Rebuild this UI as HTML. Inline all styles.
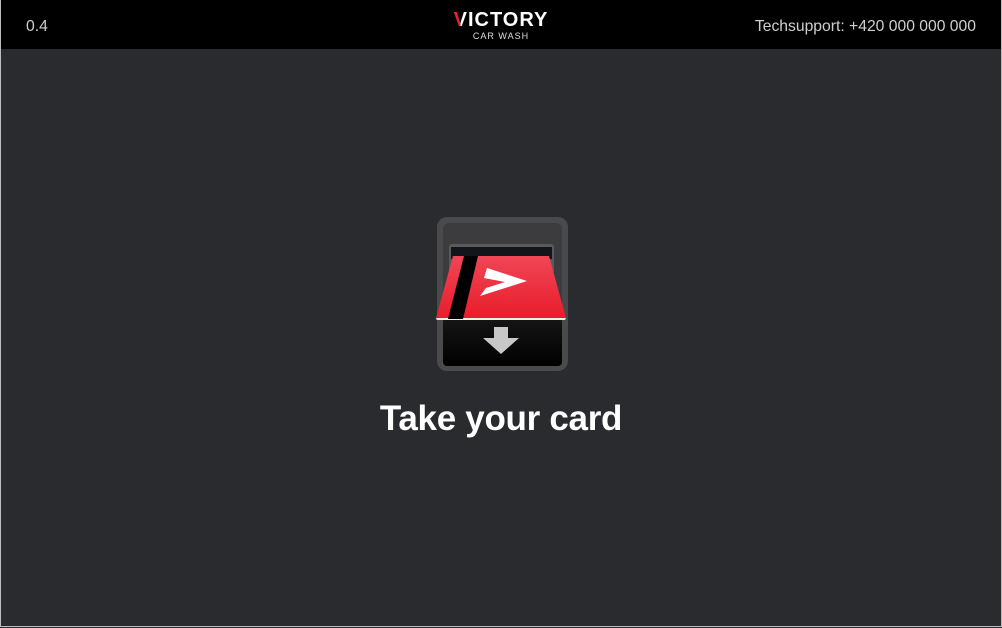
<!DOCTYPE html>
<html><head><style>
body{margin:0;width:1002px;height:628px;background:#2a2b2f;font-family:"Liberation Sans",sans-serif;overflow:hidden;position:relative}
.frame{position:absolute;left:0;top:0;width:1000px;height:626px;border:1px solid #bdbdbd;border-top:none}
.top{position:absolute;left:1px;top:0;width:1000px;height:49px;background:#000;color:#cfcfcf;font-size:15.7px}
.v{position:absolute;left:25px;top:18px}
.t{position:absolute;right:25px;top:18px}
.logo{position:absolute;left:0;width:1000px;text-align:center;top:9px;color:#fff;font-weight:bold;font-size:20px;letter-spacing:1px}
.rv{background:linear-gradient(90deg,#e8202f 0,#e8202f 48%,#fff 48%);-webkit-background-clip:text;background-clip:text;color:transparent}
.sub{position:absolute;left:0;width:1000px;text-align:center;top:31px;color:#ddd;font-size:9px;letter-spacing:1px}
h1{position:absolute;left:0;width:1002px;text-align:center;top:399px;margin:0;color:#fff;font-size:35px;font-weight:bold;letter-spacing:-0.3px}
</style></head><body>
<div class="frame"></div>
<div class="top"><span class="v">0.4</span>
<div class="logo"><span class="rv">V</span>ICTORY</div>
<div class="sub">CAR WASH</div>
<span class="t">Techsupport: +420 000 000 000</span></div>
<svg style="position:absolute;left:0;top:0" width="1002" height="628">
<defs>
<linearGradient id="c" x1="0" y1="0" x2="0" y2="1"><stop offset="0" stop-color="#f04656"/><stop offset="1" stop-color="#e81c2a"/></linearGradient>
<linearGradient id="d" x1="0" y1="0" x2="0" y2="1"><stop offset="0" stop-color="#151515"/><stop offset="1" stop-color="#000"/></linearGradient>
</defs>
<rect x="437" y="217" width="131" height="154" rx="10" fill="#4a4a4c"/>
<rect x="443" y="223" width="119" height="143" rx="6" fill="#3c3c3e"/>
<rect x="449" y="244" width="105" height="30" rx="3" fill="#5a5a5c"/>
<rect x="451" y="247" width="101" height="12" fill="#12161c"/>
<rect x="443" y="318" width="119" height="48" rx="4" fill="url(#d)"/>
<path d="M453 256 L549 256 L566 318 Q566 320 564 320 L437 320 Q435 320 436 318 Z" fill="url(#c)"/>
<path d="M436 318 L566 318 L565 320 L437 320 Z" fill="#eee"/>
<path d="M464 256 L478 256 L463 319 L448 319 Z" fill="#000"/>
<path d="M487 268 L527 281 L480 296 L486 288 L505 282 L484 278 Z" fill="#fff"/>
<path d="M494 327 L508 327 L508 338 L519 338 L501 354 L483 338 L494 338 Z" fill="#c8c8c8"/>
</svg>
<h1>Take your card</h1>
</body></html>
